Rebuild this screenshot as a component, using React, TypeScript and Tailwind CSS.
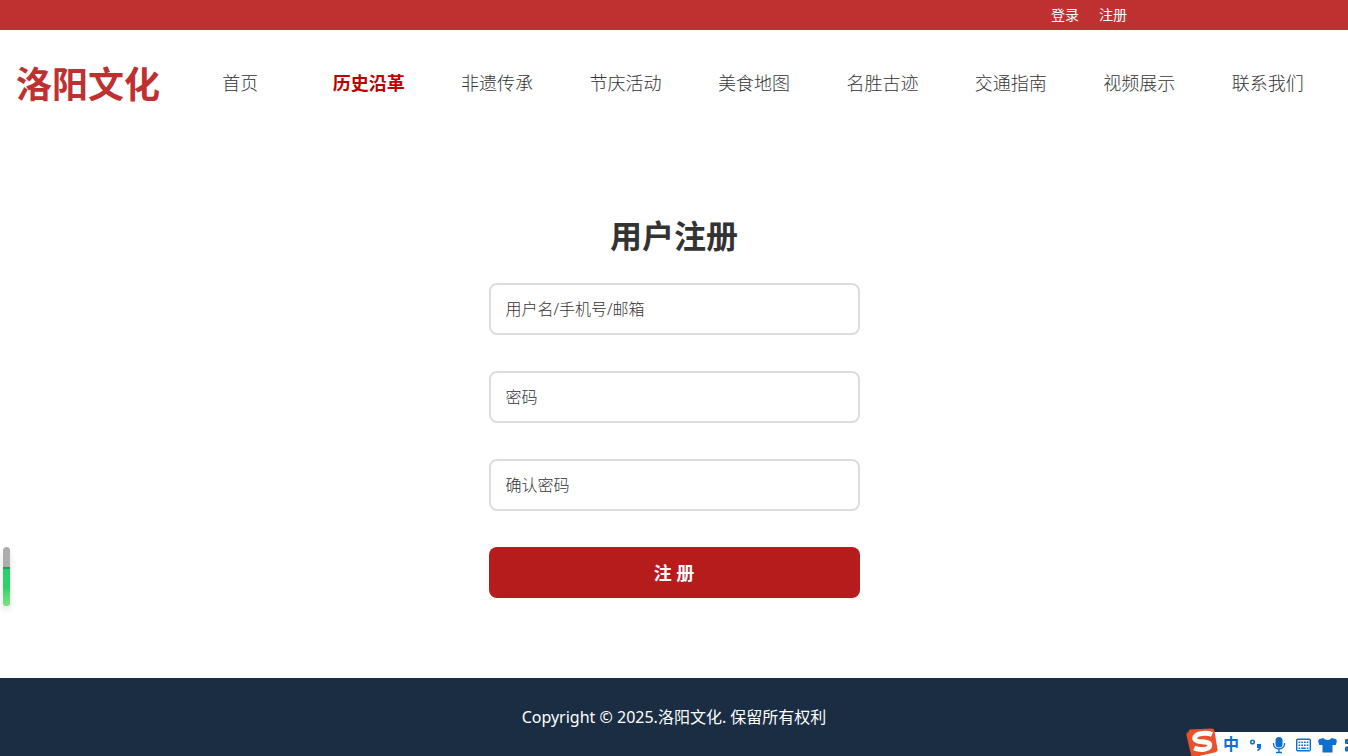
import { useState } from 'react';

interface NavItem {
  label: string;
  href: string;
  active?: boolean;
}

interface Field {
  id: string;
  type: string;
  placeholder: string;
}

const navItems: NavItem[] = [
  { label: '首页', href: '#home' },
  { label: '历史沿革', href: '#history', active: true },
  { label: '非遗传承', href: '#heritage' },
  { label: '节庆活动', href: '#festivals' },
  { label: '美食地图', href: '#food' },
  { label: '名胜古迹', href: '#sights' },
  { label: '交通指南', href: '#traffic' },
  { label: '视频展示', href: '#videos' },
  { label: '联系我们', href: '#contact' },
];

const fields: Field[] = [
  { id: 'username', type: 'text', placeholder: '用户名/手机号/邮箱' },
  { id: 'password', type: 'password', placeholder: '密码' },
  { id: 'confirm', type: 'password', placeholder: '确认密码' },
];

const TopBar = () => (
  <div className="flex h-[30px] items-center justify-end gap-5 bg-[#bf3131] pr-[221px] text-sm text-white">
    <a href="#login">登录</a>
    <a href="#register">注册</a>
  </div>
);

const Header = () => (
  <header className="flex items-center gap-4 px-4 pt-7">
    <a href="#home" className="shrink-0 text-4xl leading-[54px] font-bold text-[#bf3131]">
      洛阳文化
    </a>
    <nav className="flex flex-1 pb-1">
      {navItems.map((item) => (
        <a
          key={item.href}
          href={item.href}
          className={
            item.active
              ? 'flex-1 text-center text-lg font-bold text-[#c00000]'
              : 'flex-1 text-center text-lg font-light text-[#333]'
          }
        >
          {item.label}
        </a>
      ))}
    </nav>
  </header>
);

const RegisterForm = () => {
  const [values, setValues] = useState<Record<string, string>>({});

  return (
    <main className="flex-1 px-4 pt-[100px] pb-20">
      <form className="mx-auto flex max-w-[371px] flex-col" onSubmit={(e) => e.preventDefault()}>
        <h1 className="mb-[23px] text-center text-[32px] leading-12 font-bold text-[#333]">用户注册</h1>
        {fields.map((field) => (
          <input
            key={field.id}
            id={field.id}
            type={field.type}
            aria-label={field.placeholder}
            placeholder={field.placeholder}
            value={values[field.id] ?? ''}
            onChange={(e) => setValues({ ...values, [field.id]: e.target.value })}
            className="mb-9 h-[52px] w-full rounded-lg border-2 border-[#ddd] bg-white px-[15px] text-base text-[#333] outline-none placeholder:font-light placeholder:text-[#333] focus:border-[#b71c1c]"
          />
        ))}
        <button type="submit" className="h-[51px] w-full rounded-lg bg-[#b71c1c] text-lg font-bold text-white">
          注 册
        </button>
      </form>
    </main>
  );
};

// Small level meter on the left edge of the window
const LevelMeter = () => (
  <div className="fixed top-[547px] left-[3px] h-[59px] w-[7px] overflow-hidden rounded-full bg-[#adadad] shadow-[0_4px_6px_rgba(0,0,0,0.12)]">
    <div className="mt-5 h-[39px] border-t-2 border-[#1f9d55] bg-linear-to-b from-[#2ecc71] via-[#2ed367] to-[#7be383]"></div>
  </div>
);

// Input method toolbar in the bottom right corner
const ImeBar = () => (
  <div className="fixed right-0 bottom-0 h-7 w-[162px]">
    <div className="absolute right-0 bottom-0 h-6 w-[148px] bg-white"></div>
    <svg className="absolute inset-0" width="162" height="28" viewBox="0 0 162 28" fill="none">
      <path
        d="M3 3.5Q2 1.9 4.2 1.5L25 .4Q28 .2 28.4 2.8L31.5 21Q32 23.5 29.5 24.2L9 29Q5.8 29.5 5 27L.4 7Q0 4.6 3 3.5Z"
        fill="#e9512b"
      />
      <path d="M26 6.500C20 4 8.500 5.500 8.700 10.500C8.900 15.500 23.800 12 23.800 17C23.800 22 13.800 22.500 8.200 20" stroke="#fff" strokeWidth="4.800" />
      <g fill="#0e6fd0">
        <circle cx="66.5" cy="14" r="1.8" fill="none" stroke="#0e6fd0" strokeWidth="1.5" />
        <path d="M71 16h4v3q0 3-3.5 4l-.5-1q1.700-.8 1.700-2H71z" />
        <rect x="89.500" y="9" width="7" height="10.500" rx="3.500" />
        <path d="M87.500 15v1a5.500 5 0 0 0 11 0v-1M93 21v4M90 24.500h6" fill="none" stroke="#0e6fd0" strokeWidth="1.300" />
        <path d="M137.500 10l-4 1q-1.500.5-1.300 2.500l1 3.500h3.300v7.500h10v-7.500h3.300l1-3.500q.2-2-1.300-2.500l-4-1q-1 2-4 2t-4-2z" />
        <rect x="159" y="11" width="4" height="5" rx="1" />
        <rect x="159" y="18.500" width="4" height="5" rx="1" />
      </g>
      <rect x="110.700" y="11.200" width="13.600" height="11.600" rx="1" stroke="#0e6fd0" strokeWidth="1.400" />
      <path d="M112.600 14.200h10M112.600 17.200h10" stroke="#0e6fd0" strokeWidth="1.600" strokeDasharray="1.700 1" />
      <path d="M112.600 20.200h1.700M115.300 20.200h4.400M120.700 20.200h1.700" stroke="#0e6fd0" strokeWidth="1.600" />
    </svg>
    <span className="absolute bottom-0 left-[37px] text-base leading-6 font-bold text-[#0e6fd0]">中</span>
  </div>
);

const App = () => (
  <div className="flex min-h-screen flex-col bg-white font-['Noto_Sans','Noto_Sans_CJK_SC',sans-serif]">
    <TopBar />
    <Header />
    <RegisterForm />
    <footer className="bg-[#1a2d42] px-4 py-[27px] text-center text-base text-white">
      Copyright © 2025.洛阳文化. 保留所有权利
    </footer>
    <LevelMeter />
    <ImeBar />
  </div>
);

export default App;
